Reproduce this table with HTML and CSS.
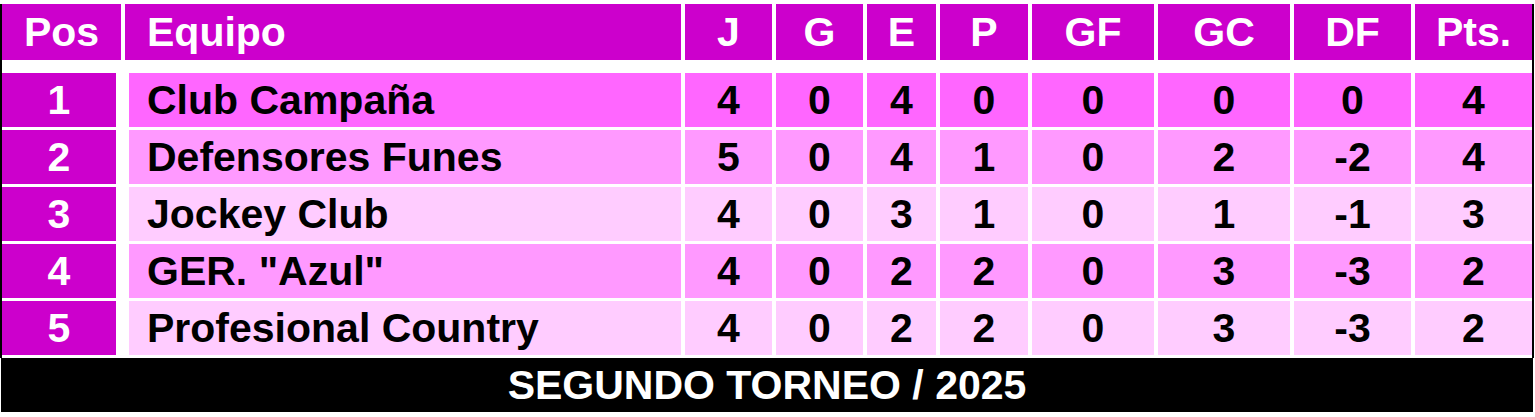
FILE: index.html
```html
<!DOCTYPE html>
<html lang="es">
<head>
<meta charset="utf-8">
<title>Tabla de posiciones</title>
<link rel="stylesheet" href="styles.css">
</head>
<body>
<div class="board">
  <div class="table">
    <div class="row head">
      <div class="cell pos">Pos</div>
      <div class="cell team">Equipo</div>
      <div class="cell">J</div>
      <div class="cell">G</div>
      <div class="cell">E</div>
      <div class="cell">P</div>
      <div class="cell">GF</div>
      <div class="cell">GC</div>
      <div class="cell">DF</div>
      <div class="cell">Pts.</div>
    </div>
    <div class="body">
      <div class="row r1">
        <div class="cell pos">1</div>
        <div class="cell team">Club Campaña</div>
        <div class="cell">4</div><div class="cell">0</div><div class="cell">4</div><div class="cell">0</div>
        <div class="cell">0</div><div class="cell">0</div><div class="cell">0</div><div class="cell">4</div>
      </div>
      <div class="row r2">
        <div class="cell pos">2</div>
        <div class="cell team">Defensores Funes</div>
        <div class="cell">5</div><div class="cell">0</div><div class="cell">4</div><div class="cell">1</div>
        <div class="cell">0</div><div class="cell">2</div><div class="cell">-2</div><div class="cell">4</div>
      </div>
      <div class="row r3">
        <div class="cell pos">3</div>
        <div class="cell team">Jockey Club</div>
        <div class="cell">4</div><div class="cell">0</div><div class="cell">3</div><div class="cell">1</div>
        <div class="cell">0</div><div class="cell">1</div><div class="cell">-1</div><div class="cell">3</div>
      </div>
      <div class="row r2">
        <div class="cell pos">4</div>
        <div class="cell team">GER. "Azul"</div>
        <div class="cell">4</div><div class="cell">0</div><div class="cell">2</div><div class="cell">2</div>
        <div class="cell">0</div><div class="cell">3</div><div class="cell">-3</div><div class="cell">2</div>
      </div>
      <div class="row r3">
        <div class="cell pos">5</div>
        <div class="cell team">Profesional Country</div>
        <div class="cell">4</div><div class="cell">0</div><div class="cell">2</div><div class="cell">2</div>
        <div class="cell">0</div><div class="cell">3</div><div class="cell">-3</div><div class="cell">2</div>
      </div>
    </div>
  </div>
  <div class="footer">SEGUNDO TORNEO / 2025</div>
</div>
</body>
</html>
```
FILE: styles.css
```css
html, body {
  margin: 0;
  padding: 0;
  background: #ffffff;
}

body {
  font-family: "Liberation Sans", Arial, sans-serif;
  font-weight: bold;
  font-size: 41px;
}

.board {
  margin-top: 4px;
  width: 1534px;
  box-sizing: border-box;
}

.table {
  border-left: 2px solid #000;
  border-right: 2px solid #000;
}

.row {
  display: grid;
  grid-template-columns: 119px 556px 87px 87px 69px 88px 122px 132px 117px 117px;
  column-gap: 4px;
}

.cell {
  display: flex;
  align-items: center;
  justify-content: center;
  line-height: 1;
  color: #000;
}

.head {
  height: 56px;
}

.head .cell {
  background: #cc00cc;
  color: #fff;
}

.head .team {
  justify-content: flex-start;
  padding-left: 22px;
}

.body {
  display: flex;
  flex-direction: column;
  gap: 3px;
  padding-top: 13px;
  padding-bottom: 3px;
}

.body .row {
  height: 54px;
}

.body .pos {
  background: #cc00cc;
  color: #fff;
  margin-right: 5px;
}

.body .team {
  justify-content: flex-start;
  padding-left: 18px;
  margin-left: 4px;
}

.r1 .cell:not(.pos) { background: #ff66ff; }
.r2 .cell:not(.pos) { background: #ff99ff; }
.r3 .cell:not(.pos) { background: #ffccff; }

.footer {
  height: 54px;
  background: #000;
  color: #fff;
  display: flex;
  align-items: center;
  justify-content: center;
  line-height: 1;
  margin-left: 1px;
  margin-right: 1px;
}
```
